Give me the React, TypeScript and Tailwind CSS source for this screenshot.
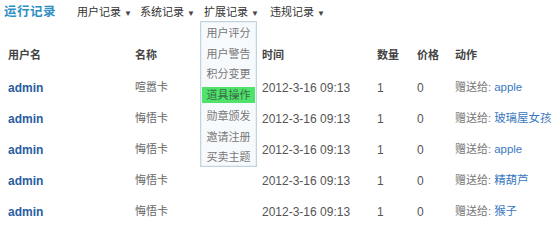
import React from "react";

const rows = [
  { name: "喧嚣卡", to: "apple" },
  { name: "悔悟卡", to: "玻璃屋女孩" },
  { name: "悔悟卡", to: "apple" },
  { name: "悔悟卡", to: "精葫芦" },
  { name: "悔悟卡", to: "猴子" },
];

const menu = ["用户评分", "用户警告", "积分变更", "道具操作", "勋章颁发", "邀请注册", "买卖主题"];

function Caret() {
  return <span className="ml-[3px] text-[8px] text-[#444]">▼</span>;
}

export default function App() {
  return (
    <div
      className="relative w-[554px] h-[227px] bg-white overflow-hidden"
      style={{ fontFamily: '"Liberation Sans", "Noto Sans CJK SC", sans-serif' }}
    >
      <div className="flex items-center h-[24px] pl-[4px] whitespace-nowrap">
        <span className="text-[12.5px] font-bold text-[#2e8fc4] w-[73px] tracking-[0.5px]">运行记录</span>
        <div className="flex items-center text-[11px] text-[#333]">
          <span className="w-[63px]">用户记录<Caret /></span>
          <span className="w-[64px]">系统记录<Caret /></span>
          <span className="w-[66px]">扩展记录<Caret /></span>
          <span>违规记录<Caret /></span>
        </div>
      </div>

      <div className="mt-[15px] text-[12px] whitespace-nowrap">
        <div className="flex items-center h-[33px] pl-[8px] text-[11px] font-bold text-[#444]">
          <div className="w-[127px]">用户名</div>
          <div className="w-[127px]">名称</div>
          <div className="w-[115px]">时间</div>
          <div className="w-[40px]">数量</div>
          <div className="w-[38px]">价格</div>
          <div>动作</div>
        </div>
        {rows.map((r, i) => (
          <div key={i} className="flex items-center h-[31px] pl-[8px] text-[#555]">
            <div className="w-[127px] font-bold text-[#2a5d9f]">admin</div>
            <div className="w-[127px] text-[11px] text-[#666]">{r.name}</div>
            <div className="w-[115px] text-[#555]">2012-3-16 09:13</div>
            <div className="w-[40px]">1</div>
            <div className="w-[38px]">0</div>
            <div className="text-[11px] text-[#777]">
              赠送给: <span className="text-[#3b78bf] text-[11.5px]">{r.to}</span>
            </div>
          </div>
        ))}
      </div>

      <div className="absolute left-[200px] top-[21px] w-[57px] h-[146px] border border-[#c3d4e0] bg-[#f7fafc] shadow-[inset_0_0_0_1px_#eaf1f6] py-[1px]">
        {menu.map((m, i) => (
          <div key={m} className="h-[20.7px] flex items-center px-[1px]">
            <div
              className={
                "w-full h-[16px] flex items-center justify-center text-[11px] " +
                (i === 3 ? "bg-[#4fe36b] text-[#3a6a48]" : "text-[#777]")
              }
            >
              {m}
            </div>
          </div>
        ))}
      </div>
    </div>
  );
}
